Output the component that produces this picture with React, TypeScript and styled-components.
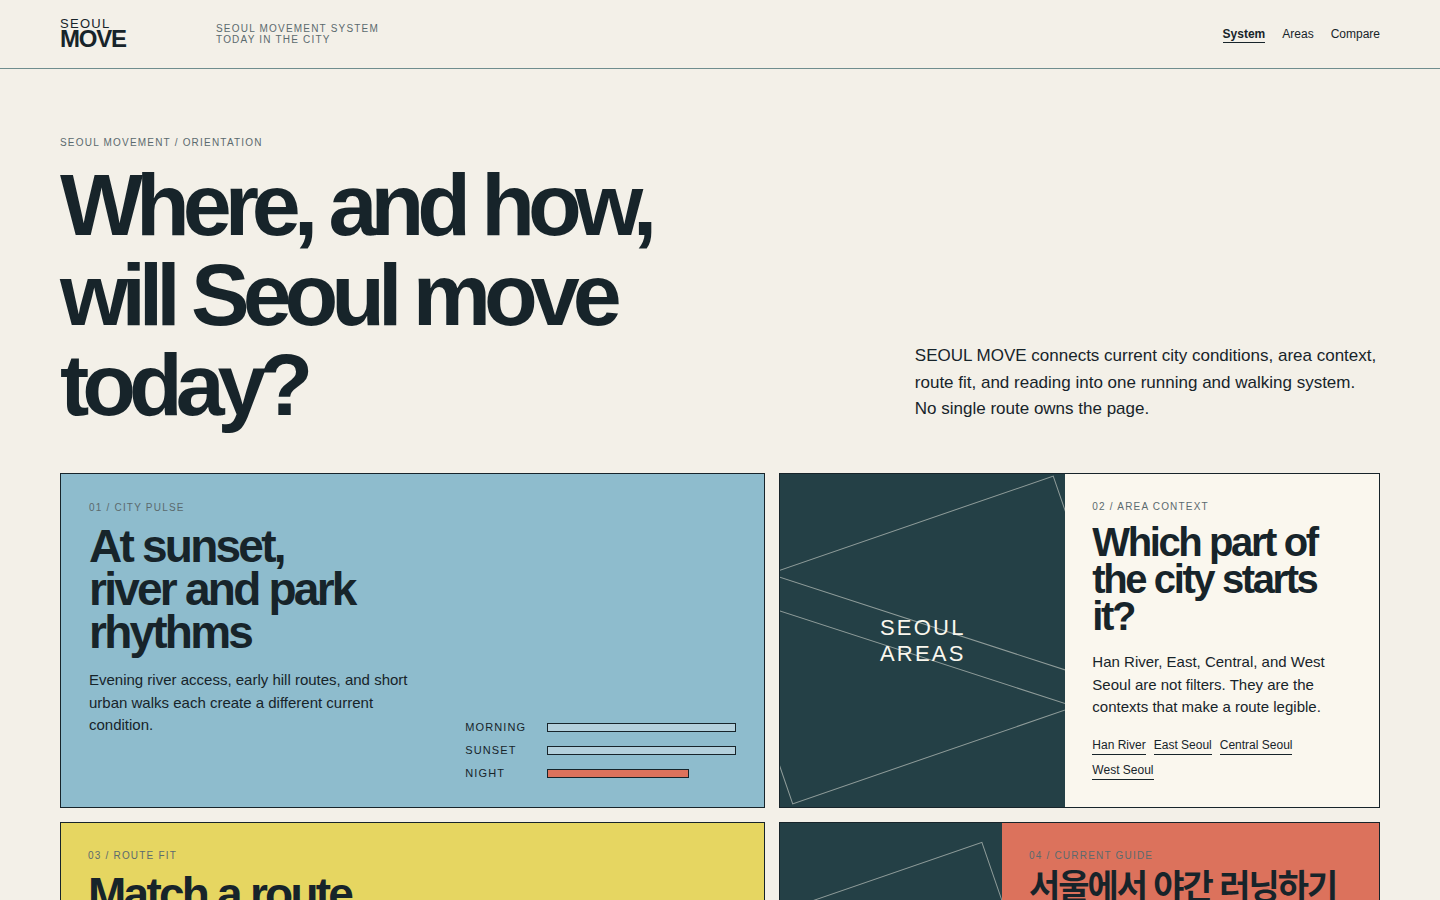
import React from "react";
import styled, { createGlobalStyle, css } from "styled-components";

const ink = "#17242a";
const paper = "#f3f0e8";
const cream = "#faf7ee";
const muted = "#5b6a6e";
const blue = "#8ebccd";
const yellow = "#e6d661";
const coral = "#dc725c";
const deep = "#244046";

const GlobalStyle = createGlobalStyle`
  *, *::before, *::after { box-sizing: border-box; }
  body {
    margin: 0;
    background: ${paper};
    color: ${ink};
    font-family: "Liberation Sans", Arial, "Noto Sans CJK KR", sans-serif;
  }
  h1, h2, p { margin: 0; }
  a { color: inherit; text-decoration: none; }
`;

const Header = styled.header`
  display: grid;
  grid-template-columns: 156px 1fr auto;
  align-items: center;
  height: 69px;
  padding: 0 60px;
  border-bottom: 1px solid #6f8d8e;
`;

const Logo = styled.a`
  display: flex;
  flex-direction: column;
  padding-bottom: 3px;
`;

const LogoTop = styled.span`
  font-size: 13px;
  line-height: 13px;
  letter-spacing: 0.1em;
`;

const LogoBottom = styled.span`
  font-size: 24px;
  line-height: 18px;
  font-weight: 700;
  letter-spacing: -0.05em;
`;

const Label = styled.p`
  font-size: 10px;
  line-height: 11px;
  letter-spacing: 0.12em;
  text-transform: uppercase;
  color: ${muted};
`;

const Nav = styled.nav`
  display: flex;
  gap: 17px;
`;

const NavLink = styled.a<{ $active?: boolean }>`
  padding: 1px 0;
  font-size: 12px;
  line-height: 14px;
  font-weight: ${(p) => (p.$active ? 700 : 400)};
  border-bottom: 1px solid ${(p) => (p.$active ? ink : "transparent")};
`;

const Main = styled.main`
  padding: 68px 60px;
`;

const Hero = styled.section`
  display: grid;
  grid-template-columns: 17fr 10fr;
  gap: 64px;
  align-items: end;
  margin-bottom: 44px;
`;

const HeroTitle = styled.h1`
  max-width: 720px;
  margin-top: 12px;
  font-size: 88px;
  line-height: 1.02;
  font-weight: 700;
  letter-spacing: -0.08em;
`;

const HeroText = styled.p`
  padding-bottom: 7px;
  font-size: 17px;
  line-height: 1.55;
`;

const Grid = styled.section`
  display: grid;
  grid-template-columns: 27fr 23fr;
  gap: 14px;
`;

const cardBase = css`
  display: grid;
  border: 1px solid ${ink};
  overflow: hidden;
`;

const PulseCard = styled.article`
  ${cardBase}
  grid-template-columns: 9fr 7fr;
  gap: 28px;
  padding: 28px 28px 27px;
  background: ${blue};
`;

const FitCard = styled.article`
  ${cardBase}
  padding: 27px;
  align-content: start;
  background: ${yellow};
`;

const SplitCard = styled.article<{ $columns: string; $fill: string; $minHeight?: number }>`
  ${cardBase}
  grid-template-columns: ${(p) => p.$columns};
  min-height: ${(p) => p.$minHeight ?? 0}px;
  background: ${(p) => p.$fill};
`;

const CardBody = styled.div`
  padding: 27px;
`;

const CardTitle = styled.h2<{ $small?: boolean }>`
  margin-top: 12px;
  font-size: ${(p) => (p.$small ? 40 : 46)}px;
  line-height: ${(p) => (p.$small ? 37 : 43)}px;
  font-weight: 700;
  letter-spacing: -0.06em;
`;

const GuideTitle = styled.h2`
  margin-top: 8px;
  font-size: 34px;
  line-height: 37px;
  font-weight: 700;
  letter-spacing: -0.06em;
  word-break: keep-all;
`;

const CardText = styled.p<{ $roomy?: boolean }>`
  margin-top: ${(p) => (p.$roomy ? 16 : 15)}px;
  font-size: 15px;
  line-height: 1.5;
`;

const Meter = styled.dl`
  display: grid;
  gap: 10px;
  align-self: end;
  margin: 0;
`;

const MeterRow = styled.div`
  display: grid;
  grid-template-columns: 72px 1fr;
  gap: 10px;
  align-items: center;
`;

const MeterLabel = styled.dt`
  font-size: 11px;
  line-height: 13px;
  letter-spacing: 0.1em;
  text-transform: uppercase;
`;

const MeterValue = styled.dd`
  margin: 0;
`;

const Bar = styled.div<{ $hot?: boolean }>`
  height: 9px;
  border: 1px solid ${ink};
  background: ${(p) => (p.$hot ? coral : "#b3d0dc")};
`;

const MapPanel = styled.div`
  position: relative;
  display: grid;
  place-items: center;
  overflow: hidden;
  background: ${deep};

  &::before,
  &::after {
    content: "";
    position: absolute;
    border: 1px solid rgba(250, 247, 238, 0.5);
  }
  &::before {
    inset: 16% -12%;
    transform: rotate(-19deg);
  }
  &::after {
    inset: 45% -12%;
    transform: rotate(18deg);
  }
`;

const MapName = styled.span`
  position: relative;
  z-index: 1;
  width: min-content;
  font-size: 22px;
  line-height: 26px;
  letter-spacing: 0.1em;
  color: ${cream};
`;

const AreaLinks = styled.nav`
  display: flex;
  flex-wrap: wrap;
  gap: 8px;
  margin-top: 19px;
`;

const AreaLink = styled.a`
  padding-bottom: 2px;
  font-size: 12px;
  line-height: 14px;
  border-bottom: 1px solid ${ink};
`;

const rhythms = [
  { name: "Morning", share: 100 },
  { name: "Sunset", share: 100 },
  { name: "Night", share: 75, hot: true },
];

const areas = ["Han River", "East Seoul", "Central Seoul", "West Seoul"];

export default function App() {
  return (
    <>
      <GlobalStyle />
      <Header>
        <Logo href="#">
          <LogoTop>SEOUL</LogoTop>
          <LogoBottom>MOVE</LogoBottom>
        </Logo>
        <Label>
          Seoul Movement System
          <br />
          Today in the city
        </Label>
        <Nav aria-label="Main">
          <NavLink href="#system" $active aria-current="page">
            System
          </NavLink>
          <NavLink href="#areas">Areas</NavLink>
          <NavLink href="#compare">Compare</NavLink>
        </Nav>
      </Header>
      <Main>
        <Hero>
          <div>
            <Label>Seoul Movement / Orientation</Label>
            <HeroTitle>Where, and how, will Seoul move today?</HeroTitle>
          </div>
          <HeroText>
            SEOUL MOVE connects current city conditions, area context, route
            fit, and reading into one running and walking system. No single
            route owns the page.
          </HeroText>
        </Hero>
        <Grid>
          <PulseCard>
            <div>
              <Label>01 / City Pulse</Label>
              <CardTitle>
                At sunset,
                <br />
                river and park rhythms
              </CardTitle>
              <CardText>
                Evening river access, early hill routes, and short urban walks
                each create a different current condition.
              </CardText>
            </div>
            <Meter>
              {rhythms.map((r) => (
                <MeterRow key={r.name}>
                  <MeterLabel>{r.name}</MeterLabel>
                  <MeterValue>
                    <Bar $hot={r.hot} style={{ width: `${r.share}%` }} />
                  </MeterValue>
                </MeterRow>
              ))}
            </Meter>
          </PulseCard>
          <SplitCard $columns="10fr 11fr" $fill={cream}>
            <MapPanel>
              <MapName>SEOUL AREAS</MapName>
            </MapPanel>
            <CardBody>
              <Label>02 / Area Context</Label>
              <CardTitle $small>Which part of the city starts it?</CardTitle>
              <CardText $roomy>
                Han River, East, Central, and West Seoul are not filters. They
                are the contexts that make a route legible.
              </CardText>
              <AreaLinks aria-label="Areas">
                {areas.map((a) => (
                  <AreaLink key={a} href="#areas">
                    {a}
                  </AreaLink>
                ))}
              </AreaLinks>
            </CardBody>
          </SplitCard>
          <FitCard>
            <Label>03 / Route Fit</Label>
            <CardTitle>Match a route</CardTitle>
          </FitCard>
          <SplitCard $columns="10fr 17fr" $fill={coral} $minHeight={357}>
            <MapPanel />
            <CardBody>
              <Label>04 / Current Guide</Label>
              <GuideTitle lang="ko">서울에서 야간 러닝하기</GuideTitle>
            </CardBody>
          </SplitCard>
        </Grid>
      </Main>
    </>
  );
}
